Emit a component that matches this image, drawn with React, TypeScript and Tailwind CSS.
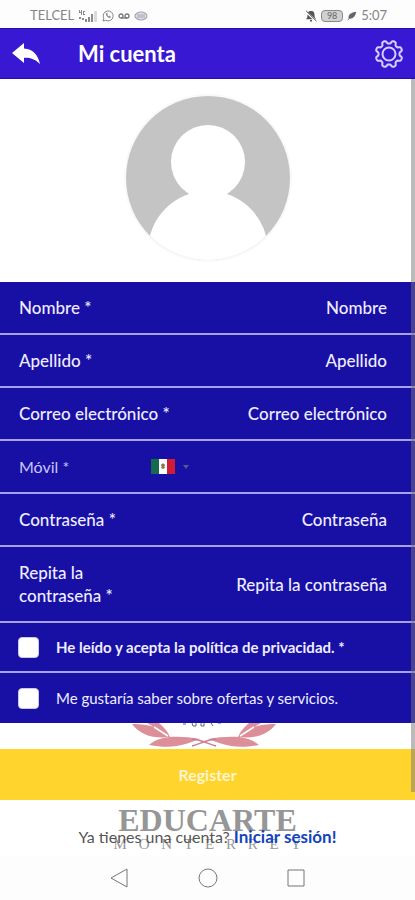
import { useState } from "react";

interface Field {
  id: string;
  label: string;
  placeholder: string;
  type: string;
}

const FIELDS_TOP: Field[] = [
  { id: "nombre", label: "Nombre *", placeholder: "Nombre", type: "text" },
  { id: "apellido", label: "Apellido *", placeholder: "Apellido", type: "text" },
  { id: "correo", label: "Correo electrónico *", placeholder: "Correo electrónico", type: "email" },
];

const FIELDS_BOTTOM: Field[] = [
  { id: "clave", label: "Contraseña *", placeholder: "Contraseña", type: "password" },
  { id: "clave2", label: "Repita la contraseña *", placeholder: "Repita la contraseña", type: "password" },
];

// outline of the gear: eight rounded teeth around the centre
function gearPath(): string {
  const points: string[] = [];
  for (let i = 0; i < 128; i++) {
    const angle = (i / 128) * Math.PI * 2;
    const wave = Math.tanh(2.2 * Math.cos(8 * angle + Math.PI)) / Math.tanh(2.2);
    const r = 12 + 1.5 * wave;
    points.push(`${(16 + r * Math.sin(angle)).toFixed(2)} ${(16 - r * Math.cos(angle)).toFixed(2)}`);
  }
  return `M${points.join("L")}Z`;
}

function StatusBar() {
  return (
    <div className="flex h-7 items-center justify-between bg-[#fdfdfd] pl-[30px] pr-7 pt-1 text-[13px] text-[#858585]">
      <div className="flex items-center gap-1">
        <span>TELCEL</span>
        <svg className="h-3 w-5" viewBox="0 0 20 12" fill="#8a8a8a" aria-hidden="true">
          <path d="M1 0h1v2h1V0h1v5H3V3H1zM5 1h2v1H6v2h1v1H5zM1 7h2v2H1zM4 8h2v2H4zM7 9h2v3H7zM10 7h2v5h-2zM13 4h2v8h-2z" />
          <path d="M16 1h3v11h-3z" fill="#dadada" />
        </svg>
        <svg className="h-3 w-3" viewBox="0 0 12 12" fill="none" stroke="#858585" aria-hidden="true">
          <path d="M1 11l.8-2.6a5 5 0 1 1 1.9 1.9z" />
          <path d="M4.2 3.5c-.5 2 2 4.6 4 4.2l.4-1-1.4-.8-.7.6-1.3-1.4.5-.7-.6-1.3z" fill="#858585" strokeWidth=".4" />
        </svg>
        <svg className="h-2 w-3" viewBox="0 0 12 8" fill="none" stroke="#777" strokeWidth="1.3" aria-hidden="true">
          <circle cx="3" cy="4" r="2" />
          <circle cx="9" cy="4" r="2" />
          <path d="M3 6h6" />
        </svg>
        <svg className="h-3 w-3.5" viewBox="0 0 14 12" fill="#dddfe5" stroke="#a4a7ae" strokeWidth="1.2" aria-hidden="true">
          <ellipse cx="7" cy="6" rx="6" ry="4" />
          <path d="M3 5h8M3 7h8" />
        </svg>
      </div>
      <div className="flex items-center gap-1">
        <svg className="h-3 w-3" viewBox="0 0 12 12" aria-hidden="true">
          <path d="M6 1c-3 0-3.5 2-3.5 4S2 8 1 9.300h10C10 8 9.500 7 9.500 5S9 1 6 1zM5 10h2v1.500H5z" fill="#555" />
          <path d="M0 1l11.500 10.500" stroke="#fff" strokeWidth="2" />
          <path d="M1 0.800l10.500 10.400" stroke="#555" />
        </svg>
        <span className="flex h-3 w-[22px] items-center justify-center rounded-sm border border-[#888] bg-[#d0d0d0] text-[9px] text-[#666]">
          98
        </span>
        <svg className="h-2.5 w-2.5" viewBox="0 0 12 12" aria-hidden="true">
          <path d="M11 1C5 2 1 4 2 9c5 1 8-2 9-8z" fill="#666" />
          <path d="M1 11l5-6" stroke="#666" />
        </svg>
        <span>5:07</span>
      </div>
    </div>
  );
}

function Avatar() {
  return (
    <svg className="h-[168px] w-[168px]" viewBox="0 0 168 168" role="img" aria-label="Foto de perfil">
      <defs>
        <clipPath id="avatar">
          <circle cx="84" cy="84" r="82" />
        </clipPath>
      </defs>
      <circle cx="84" cy="84" r="83" fill="#fff" stroke="#f9f9f9" strokeWidth="2" />
      <g clipPath="url(#avatar)">
        <rect width="168" height="168" fill="#c4c4c4" />
        <circle cx="84" cy="68" r="37" fill="#fff" />
        <circle cx="84" cy="157" r="60" fill="#fff" />
      </g>
    </svg>
  );
}

function FieldRow({ field }: { field: Field }) {
  return (
    <div className="flex min-h-[53px] items-center border-b-2 border-[#a5a2ea] pl-[19px] pr-7">
      <label htmlFor={field.id} className={field.id === "clave2" ? "w-32 shrink-0 py-3.5" : "shrink-0"}>
        {field.label}
      </label>
      <input
        id={field.id}
        type={field.type}
        placeholder={field.placeholder}
        className="min-w-0 flex-1 bg-transparent text-right outline-none placeholder:text-[#eeedff]"
      />
    </div>
  );
}

function PhoneRow() {
  return (
    <div className="flex h-[53px] items-center border-b-2 border-[#a5a2ea] pl-[19px] pr-7">
      <label htmlFor="movil" className="w-[132px] shrink-0 text-base font-normal text-[#c9c7f5]">
        Móvil *
      </label>
      <button type="button" aria-label="País: México" className="flex items-center gap-2">
        <svg className="h-[15px] w-6" viewBox="0 0 24 15" aria-hidden="true">
          <rect width="24" height="15" fill="#fff" />
          <rect width="8" height="15" fill="#176b4d" />
          <rect x="16" width="8" height="15" fill="#d21c35" />
          <path d="M10 6c1-2 3-2 4 0l-1 3h-2z" fill="#8c7a4f" />
          <path d="M10 8c1 2 3 2 4 0" fill="none" stroke="#5c8a56" />
        </svg>
        <svg className="h-1 w-1.5" viewBox="0 0 6 4" aria-hidden="true">
          <path d="M0 0h6L3 4z" fill="#5d568f" />
        </svg>
      </button>
      <input id="movil" type="tel" className="min-w-0 flex-1 bg-transparent text-right outline-none" />
    </div>
  );
}

interface ConsentProps {
  id: string;
  text: string;
  strong?: boolean;
}

function Consent({ id, text, strong }: ConsentProps) {
  const [checked, setChecked] = useState(false);

  return (
    <div className={`flex h-[50px] items-center gap-[17px] pl-[18px] text-[15px] ${strong ? "border-b-2 border-[#a5a2ea] font-bold" : "font-normal"}`}>
      <input
        id={id}
        type="checkbox"
        checked={checked}
        onChange={(e) => setChecked(e.target.checked)}
        className="h-[21px] w-[21px] shrink-0 appearance-none rounded-sm border border-[#c9c9dd] bg-white checked:bg-[#ffd42a]"
      />
      <label htmlFor={id}>{text}</label>
    </div>
  );
}

function Laurel() {
  return (
    <svg className="h-[26px] w-36" viewBox="0 0 144 26" aria-hidden="true">
      <g fill="#dc8f99">
        <path d="M0 1C9 1 17 2 22 4L15 0H27C32 4 36 9 38 14C22 16 8 12 0 1z" />
        <path d="M144 1C135 1 127 2 122 4L129 0H117C112 4 108 9 106 14C122 16 136 12 144 1z" />
        <path d="M17 22C27 13 44 12 68 16C56 20 44 27 17 22z" />
        <path d="M127 22C117 13 100 12 76 16C88 20 100 27 127 22z" />
      </g>
      <path d="M22 4L36 13M122 4L108 13" stroke="#fff" strokeWidth="1.5" />
      <path d="M60 23C68 21 74 17 84 16M84 23C76 21 70 17 60 16" fill="none" stroke="#cf7d88" strokeWidth="1.5" />
      <path d="M51 1h3M60 0l1 3h3V0M69 0v3h3V0M79 0l2 3M86 0h3" fill="none" stroke="#666" />
    </svg>
  );
}

export default function App() {
  return (
    <div className="relative min-h-screen bg-white font-['Lato',sans-serif]">
      <StatusBar />
      <header className="flex h-[51px] items-center border-y border-[#2410b0] bg-[#3818d2] pl-3 pr-[10px]">
        <button type="button" aria-label="Volver" className="shrink-0">
          <svg className="h-[22px] w-7" viewBox="0 0 28 22" aria-hidden="true">
            <path d="M0 10L12 0v5.500C21 6 26 12 28 21 23 16 18 14.500 12 14.800V20z" fill="#fff" />
          </svg>
        </button>
        <h1 className="flex-1 pl-[38px] text-[22px] font-bold text-white">Mi cuenta</h1>
        <button type="button" aria-label="Ajustes" className="shrink-0">
          <svg className="h-8 w-8" viewBox="0 0 32 32" fill="none" stroke="#d5d0ff" strokeWidth="2" aria-hidden="true">
            <path d={gearPath()} />
            <circle cx="16" cy="16" r="6.500" />
          </svg>
        </button>
      </header>

      <main className="relative">
        <div className="flex h-[203px] justify-center pt-[15px]">
          <Avatar />
        </div>
        <form onSubmit={(e) => e.preventDefault()}>
          <div className="bg-[#180fa5] text-[17px] leading-[23px] font-medium text-[#eeedff]">
            {FIELDS_TOP.map((field) => (
              <FieldRow key={field.id} field={field} />
            ))}
            <PhoneRow />
            {FIELDS_BOTTOM.map((field) => (
              <FieldRow key={field.id} field={field} />
            ))}
            <Consent id="privacidad" text="He leído y acepta la política de privacidad. *" strong />
            <Consent id="ofertas" text="Me gustaría saber sobre ofertas y servicios." />
          </div>
          <div className="flex justify-center pr-2">
            <Laurel />
          </div>
          <button type="submit" className="h-[51px] w-full bg-[#ffd42c] text-base font-bold text-[#fff6cf]">
            Register
          </button>
        </form>
        {/* scroll indicator */}
        <div className="absolute top-0 right-0 bottom-2 w-1 bg-[#787878]/50" />
      </main>

      <footer>
        <div className="relative h-14 pt-1">
          <div className="mx-auto w-[188px] font-['Liberation_Serif',serif] text-[#969696]" aria-hidden="true">
            <div className="text-center text-[32px] leading-8 font-bold">EDUCARTE</div>
            <div className="flex justify-between text-[15px] leading-4">
              {"MONTERREY".split("").map((letter, i) => (
                <span key={i}>{letter}</span>
              ))}
            </div>
          </div>
          <p className="absolute inset-x-0 top-[25px] text-center text-base leading-6 text-[#555]">
            Ya tienes una cuenta?{" "}
            <a href="#login" className="text-[17px] font-bold text-[#1244bd]">
              Iniciar sesión!
            </a>
          </p>
        </div>
        <nav className="flex h-11 items-center justify-center gap-[62px] bg-[#fdfdfd]">
          <button type="button" aria-label="Atrás">
            <svg className="h-[26px] w-[26px]" viewBox="0 0 26 26" fill="none" stroke="#777" aria-hidden="true">
              <path d="M20 4v18L4 13z" />
            </svg>
          </button>
          <button type="button" aria-label="Inicio">
            <svg className="h-[26px] w-[26px]" viewBox="0 0 26 26" fill="none" stroke="#777" aria-hidden="true">
              <circle cx="13" cy="13" r="9" />
            </svg>
          </button>
          <button type="button" aria-label="Recientes">
            <svg className="h-[26px] w-[26px]" viewBox="0 0 26 26" fill="none" stroke="#777" aria-hidden="true">
              <path d="M5 5h16v16H5z" />
            </svg>
          </button>
        </nav>
      </footer>
    </div>
  );
}
